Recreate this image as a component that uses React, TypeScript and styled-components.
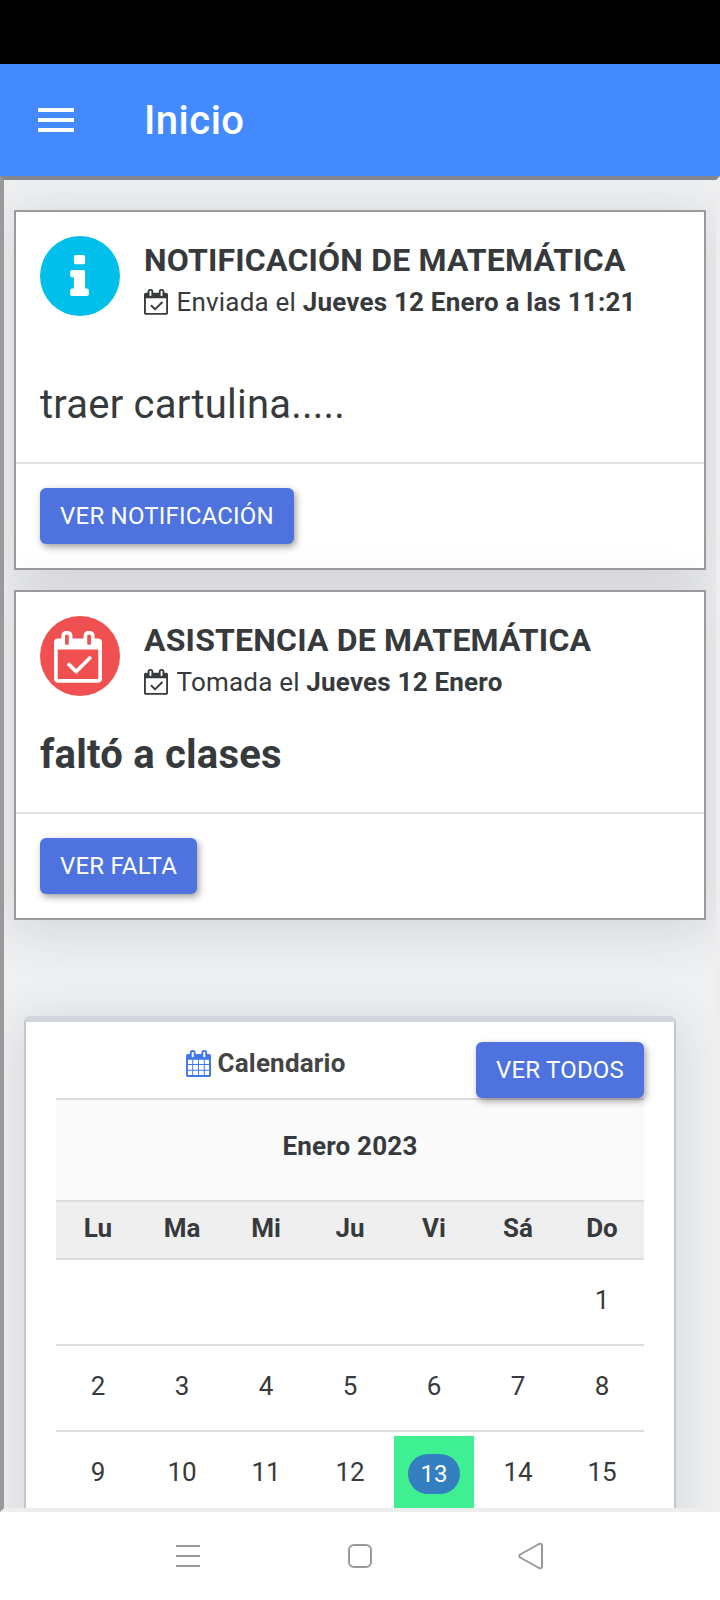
import React from "react";
import styled, { createGlobalStyle } from "styled-components";

const GlobalStyle = createGlobalStyle`
  * { box-sizing: border-box; }
  body {
    margin: 0;
    background: #fff;
    font-family: Roboto, "Liberation Sans", sans-serif;
    color: #373a3c;
  }
`;

const Screen = styled.div`
  width: 720px;
  height: 1600px;
  display: flex;
  flex-direction: column;
  overflow: hidden;
  background: #fff;
`;

const StatusBar = styled.div`
  flex: none;
  height: 64px;
  background: #000;
`;

const AppBar = styled.header`
  flex: none;
  height: 112px;
  display: flex;
  align-items: center;
  gap: 70px;
  padding-left: 38px;
  background: #448aff;
`;

const MenuButton = styled.div`
  width: 36px;
  display: flex;
  flex-direction: column;
  gap: 6px;
`;

const MenuLine = styled.span`
  height: 4px;
  background: #fff;
`;

const Title = styled.h1`
  margin: 2px 0 0;
  font-size: 40px;
  font-weight: 500;
  line-height: 56px;
  letter-spacing: 0.5px;
  color: #fff;
`;

const Content = styled.main`
  flex: none;
  height: 1336px;
  overflow: hidden;
  border: 4px solid;
  border-color: #82868e #eeeeef #eee #9a9a9b;
  background: #eff0f2;
  padding: 30px 10px 0;
`;

const CardList = styled.div`
  display: flex;
  flex-direction: column;
  gap: 20px;
`;

const Card = styled.section`
  width: 692px;
  border: 2px solid #9b9b9d;
  background: #fff;
  box-shadow: 0 8px 50px rgba(58, 59, 69, 0.16);
`;

const CardBody = styled.div`
  padding: 24px 24px 28px;
`;

const CardHeader = styled.div`
  display: flex;
  gap: 24px;
  height: 80px;
`;

const Badge = styled.div<{ $color: string; $inset: string }>`
  flex: none;
  width: 80px;
  height: 80px;
  border-radius: 50%;
  display: flex;
  padding: ${(p) => p.$inset};
  background: ${(p) => p.$color};
  color: #fff;

  svg {
    flex: none;
  }
`;

const CardTitle = styled.h2`
  margin: 0;
  padding-bottom: 1px;
  font-size: 32px;
  font-weight: 700;
  line-height: 48px;
  letter-spacing: 0.19px;
  white-space: nowrap;
`;

const CardMeta = styled.div`
  font-size: 26px;
  line-height: 34px;
  letter-spacing: 0.2px;
  white-space: nowrap;

  svg {
    vertical-align: -4px;
    margin-right: 8.5px;
  }
`;

const Message = styled.p<{ $gap: number; $bold?: boolean }>`
  margin: ${(p) => p.$gap}px 0 0;
  padding-top: 1px;
  font-size: 40px;
  font-weight: ${(p) => (p.$bold ? 700 : 400)};
  line-height: 59px;
  letter-spacing: 0.22px;
`;

const CardFooter = styled.div`
  border-top: 2px solid #e3e3e4;
  padding: 24px;
`;

const Button = styled.button<{ $width: number }>`
  display: block;
  width: ${(p) => p.$width}px;
  height: 56px;
  padding: 0;
  border: 0;
  border-radius: 6px;
  background: #4e73df;
  color: #fff;
  font-family: inherit;
  font-size: 24px;
  line-height: 56px;
  letter-spacing: 0.2px;
  white-space: nowrap;
  box-shadow: 2px 3px 7px rgba(0, 0, 0, 0.38);
`;

const Panel = styled.section`
  width: 652px;
  height: 600px;
  margin: 96px 0 0 10px;
  padding: 20px 30px 0;
  border: 2px solid #c5c7ce;
  border-top: 6px solid #d2d4de;
  border-radius: 6px 6px 0 0;
  background: #fff;
  box-shadow: 0 8px 50px rgba(58, 59, 69, 0.16);
`;

const PanelHeader = styled.div`
  position: relative;
  z-index: 1;
  display: flex;
  justify-content: space-between;
  height: 56px;
`;

const PanelTitle = styled.div`
  width: 420px;
  display: flex;
  justify-content: center;
  align-items: center;
  gap: 6px;
  height: 42px;
  font-size: 26px;
  font-weight: 700;
  line-height: 42px;
  letter-spacing: 0.2px;
  color: #444;

  svg {
    color: #4277e8;
  }
`;

const Month = styled.div`
  height: 102px;
  border-top: 2px solid #ddd;
  background: #fafafa;
  font-size: 26px;
  font-weight: 700;
  line-height: 92px;
  letter-spacing: 0.2px;
  text-align: center;
`;

const Week = styled.div<{ $head?: boolean }>`
  display: grid;
  grid-template-columns: repeat(7, 84px);
  height: ${(p) => (p.$head ? 58 : 86)}px;
  border-top: 2px solid #ddd;
  background: ${(p) => (p.$head ? "#efefef" : "#fff")};
  font-size: 26px;
  font-weight: ${(p) => (p.$head ? 700 : 400)};
  line-height: ${(p) => (p.$head ? 53 : 80)}px;
  text-align: center;
`;

const Today = styled.span`
  display: flex;
  justify-content: center;
  margin: 4px 2px 0;
  padding-top: 18px;
  background: #3ef092;
`;

const TodayPill = styled.span`
  width: 52px;
  height: 40px;
  border-radius: 20px;
  background: #337fc0;
  color: #fff;
  font-size: 24px;
  line-height: 40px;
`;

const NavBar = styled.nav`
  flex: 1;
  display: grid;
  grid-template-columns: 172px 170px 26px;
  align-items: center;
  padding-left: 176px;
  background: #fff;
`;

const CALENDAR_FRAME =
  "M512 448v-288q0-14-9-23t-23-9h-64q-14 0-23 9t-9 23v288q0 14 9 23t23 9h64q14 0 23-9t9-23zm768 0v-288q0-14-9-23t-23-9h-64q-14 0-23 9t-9 23v288q0 14 9 23t23 9h64q14 0 23-9t9-23zm384-64v1280q0 52-38 90t-90 38h-1408q-52 0-90-38t-38-90v-1280q0-52 38-90t90-38h128v-96q0-66 47-113t113-47h64q66 0 113 47t47 113v96h384v-96q0-66 47-113t113-47h64q66 0 113 47t47 113v96h128q52 0 90 38t38 90z";

const CalendarCheckIcon = ({ size }: { size: number }) => (
  <svg width={size} height={(size * 1792) / 1664} viewBox="0 0 1664 1792" fill="currentColor">
    <path
      d={
        "M1303 964l-512 512q-10 9-23 9t-23-9l-288-288q-9-10-9-23t9-22l46-46q9-9 22-9t23 9l220 220 444-444q10-9 23-9t22 9l46 46q9 9 9 22t-9 23zm-1175 700h1408v-1024h-1408v1024z" +
        CALENDAR_FRAME
      }
      fillRule="evenodd"
    />
  </svg>
);

const CalendarGridIcon = () => (
  <svg width="25" height="27" viewBox="0 0 1664 1792" fill="currentColor">
    <path
      d={
        "M128 1664h288v-288h-288zM480 1664h320v-288h-320zM864 1664h320v-288h-320zM1248 1664h288v-288h-288zM128 1312h288v-320h-288zM480 1312h320v-320h-320zM864 1312h320v-320h-320zM1248 1312h288v-320h-288zM128 928h288v-288h-288zM480 928h320v-288h-320zM864 928h320v-288h-320zM1248 928h288v-288h-288z" +
        CALENDAR_FRAME
      }
      fillRule="evenodd"
    />
  </svg>
);

const InfoIcon = () => (
  <svg width="19" height="41" viewBox="576 128 640 1408" fill="currentColor">
    <path d="M1216 1344v128q0 26-19 45t-45 19h-512q-26 0-45-19t-19-45v-128q0-26 19-45t45-19h64v-384h-64q-26 0-45-19t-19-45v-128q0-26 19-45t45-19h384q26 0 45 19t19 45v576h64q26 0 45 19t19 45zm-128-1152v192q0 26-19 45t-45 19h-256q-26 0-45-19t-19-45v-192q0-26 19-45t45-19h256q26 0 45 19t19 45z" />
  </svg>
);

const RecentsIcon = () => (
  <svg width="24" height="24" viewBox="0 0 24 24" stroke="#999" strokeWidth="2">
    <path d="M0 2h24M0 12h24M0 22h24" />
  </svg>
);

const HomeIcon = () => (
  <svg width="24" height="24" viewBox="0 0 24 24" fill="none" stroke="#999" strokeWidth="2">
    <rect x="1" y="1" width="22" height="22" rx="5" />
  </svg>
);

const BackIcon = () => (
  <svg width="26" height="28" viewBox="0 0 26 28" fill="none" stroke="#999" strokeWidth="2" strokeLinejoin="round">
    <path d="M2.2 12.5L21 2Q24 .8 24 4V24Q24 27.2 21 26L2.2 15.5Q.4 14 2.2 12.5z" />
  </svg>
);

const WEEKDAYS = ["Lu", "Ma", "Mi", "Ju", "Vi", "Sá", "Do"];
const TODAY = 13;
const WEEKS: (number | null)[][] = [
  [null, null, null, null, null, null, 1],
  [2, 3, 4, 5, 6, 7, 8],
  [9, 10, 11, 12, 13, 14, 15],
];

export default function App() {
  return (
    <Screen>
      <GlobalStyle />
      <StatusBar />
      <AppBar>
        <MenuButton>
          <MenuLine />
          <MenuLine />
          <MenuLine />
        </MenuButton>
        <Title>Inicio</Title>
      </AppBar>
      <Content>
        <CardList>
          <Card>
            <CardBody>
              <CardHeader>
                <Badge $color="#00bfea" $inset="19px 0 0 30px">
                  <InfoIcon />
                </Badge>
                <div>
                  <CardTitle>NOTIFICACIÓN DE MATEMÁTICA</CardTitle>
                  <CardMeta>
                    <CalendarCheckIcon size={24} />
                    Enviada el <b>Jueves 12 Enero a las 11:21</b>
                  </CardMeta>
                </div>
              </CardHeader>
              <Message $gap={58}>traer cartulina.....</Message>
            </CardBody>
            <CardFooter>
              <Button $width={254}>VER NOTIFICACIÓN</Button>
            </CardFooter>
          </Card>
          <Card>
            <CardBody>
              <CardHeader>
                <Badge $color="#f05050" $inset="15px 0 0 14px">
                  <CalendarCheckIcon size={48} />
                </Badge>
                <div>
                  <CardTitle>ASISTENCIA DE MATEMÁTICA</CardTitle>
                  <CardMeta>
                    <CalendarCheckIcon size={24} />
                    Tomada el <b>Jueves 12 Enero</b>
                  </CardMeta>
                </div>
              </CardHeader>
              <Message $gap={28} $bold>
                faltó a clases
              </Message>
            </CardBody>
            <CardFooter>
              <Button $width={157}>VER FALTA</Button>
            </CardFooter>
          </Card>
        </CardList>
        <Panel>
          <PanelHeader>
            <PanelTitle>
              <CalendarGridIcon />
              Calendario
            </PanelTitle>
            <Button $width={168}>VER TODOS</Button>
          </PanelHeader>
          <Month>Enero 2023</Month>
          <Week $head>
            {WEEKDAYS.map((d) => (
              <span key={d}>{d}</span>
            ))}
          </Week>
          {WEEKS.map((week, i) => (
            <Week key={i}>
              {week.map((day, j) =>
                day === TODAY ? (
                  <Today key={j}>
                    <TodayPill>{day}</TodayPill>
                  </Today>
                ) : (
                  <span key={j}>{day}</span>
                )
              )}
            </Week>
          ))}
        </Panel>
      </Content>
      <NavBar>
        <RecentsIcon />
        <HomeIcon />
        <BackIcon />
      </NavBar>
    </Screen>
  );
}
